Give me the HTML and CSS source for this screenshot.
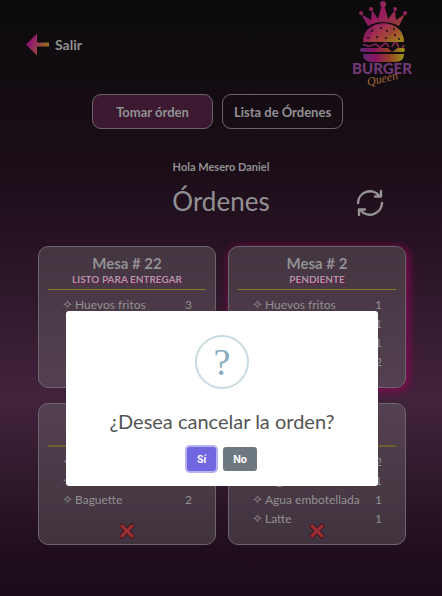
FILE: index.html
```html
<!DOCTYPE html>
<html lang="es">
<head>
<meta charset="utf-8">
<meta name="viewport" content="width=device-width, initial-scale=1">
<title>Órdenes</title>
<link rel="stylesheet" href="styles.css">
</head>
<body>
<header class="top">
  <a class="exit" href="#">
    <svg width="24" height="23" viewBox="0 0 24 23" aria-hidden="true">
      <defs><linearGradient id="arrow" x1="0" y1="0" x2="1" y2=".4"><stop offset=".3" stop-color="#8f1774"/><stop offset="1" stop-color="#9c6c20"/></linearGradient></defs>
      <path fill="url(#arrow)" d="M0 11.500 11 .5V9.500H23V13.500H11V22.500Z"/>
    </svg>
    <span>Salir</span>
  </a>
  <svg class="logo" width="66" height="88" viewBox="0 0 66 88" role="img" aria-label="Burger Queen">
    <defs>
      <linearGradient id="crown" x1="0" y1="0" x2="1" y2=".6"><stop offset="0" stop-color="#6a3078"/><stop offset=".5" stop-color="#94195f"/><stop offset="1" stop-color="#96393f"/></linearGradient>
      <linearGradient id="bun" x1="0" y1="0" x2="1" y2=".6"><stop offset="0" stop-color="#741a6c"/><stop offset=".4" stop-color="#93205a"/><stop offset=".75" stop-color="#9b4a2e"/><stop offset="1" stop-color="#9c801a"/></linearGradient>
      <linearGradient id="base" x1="0" y1="0" x2="1" y2="0"><stop offset="0" stop-color="#5c2c74"/><stop offset=".3" stop-color="#8b1260"/><stop offset=".65" stop-color="#954224"/><stop offset="1" stop-color="#9a9616"/></linearGradient>
    </defs>
    <g fill="url(#crown)">
      <path d="M19 26 12 14 22 20 23 10 29 19 33 4H35L39 19 46 10 47 20 56 14 50 26Q34 18 19 26Z"/>
      <circle cx="34" cy="4" r="3"/><circle cx="22" cy="9" r="2"/><circle cx="46" cy="9" r="2"/><circle cx="12" cy="13" r="2"/><circle cx="56" cy="13" r="2"/>
    </g>
    <path fill="url(#bun)" d="M14 42C14 17 55 17 55 42Z"/>
    <path fill="#b84548" opacity=".35" d="m26 25-5 17h15l7-17ZM43 42l4-14 6 8Z"/>
    <g fill="#170c13"><circle cx="23" cy="31" r="1"/><circle cx="32" cy="28" r="1"/><circle cx="38" cy="31" r="1"/><circle cx="45" cy="29" r="1"/><circle cx="19" cy="38" r="1"/><circle cx="28" cy="37" r="1"/><circle cx="37" cy="38" r="1"/><circle cx="46" cy="35" r="1"/><circle cx="50" cy="39" r="1"/></g>
    <path d="M14 45q3 0 5 1t5-1 5 1 5-1 5 1 5-1 5 1 6-1" fill="none" stroke="url(#crown)" stroke-width="1.500"/>
    <rect x="11" y="48" width="45" height="4" rx="2" fill="url(#base)"/>
    <path d="M38 47h12l-7 5Z" fill="#140c12"/>
    <path fill="url(#base)" d="M14 54H55Q55 62 46 62H23Q14 62 14 54Z"/>
    <text class="logo-name" x="33" y="74" text-anchor="middle">BURGER</text>
    <text class="logo-script" transform="translate(19 86) rotate(-13)">Queen</text>
  </svg>
</header>

<nav class="tabs">
  <button class="tab tab-active" type="button">Tomar órden</button>
  <button class="tab" type="button">Lista de Órdenes</button>
</nav>

<main>
  <p class="greeting">Hola Mesero Daniel</p>
  <div class="heading">
    <h1>Órdenes</h1>
    <button class="refresh" type="button" aria-label="Actualizar">
      <svg width="28" height="28" viewBox="0 0 28 28" fill="none" stroke="#969395" stroke-width="2.400" stroke-linecap="round" stroke-linejoin="round" aria-hidden="true">
        <path d="M2 14A12 12 0 0 1 23.500 7M25 2V7.500H19M26 14A12 12 0 0 1 4.500 21M3 26V20.500H9"/>
      </svg>
    </button>
  </div>

  <section class="orders">
    <article class="card">
      <h2>Mesa # 22</h2>
      <p class="status">LISTO PARA ENTREGAR</p>
      <ul class="items">
        <li><span><i class="star">✧</i>Huevos fritos</span><span>3</span></li>
      </ul>
    </article>
    <article class="card card-pending">
      <h2>Mesa # 2</h2>
      <p class="status">PENDIENTE</p>
      <ul class="items">
        <li><span><i class="star">✧</i>Huevos fritos</span><span>1</span></li>
        <li><span><i class="star">✧</i></span><span>1</span></li>
        <li><span><i class="star">✧</i></span><span>1</span></li>
        <li><span><i class="star">✧</i></span><span>2</span></li>
      </ul>
    </article>
    <article class="card card-done">
      <h2></h2>
      <p class="status"></p>
      <ul class="items">
        <li><span><i class="star">✧</i></span></li>
        <li><span><i class="star">✧</i></span></li>
        <li><span><i class="star">✧</i>Baguette</span><span>2</span></li>
      </ul>
      <button class="cancel" type="button" aria-label="Cancelar orden"><svg width="16" height="16" viewBox="0 0 16 16" aria-hidden="true"><path class="x-edge" d="m3 3 10 10M13 3 3 13"/><path class="x-fill" d="m3 3 10 10M13 3 3 13"/></svg></button>
    </article>
    <article class="card card-done">
      <h2></h2>
      <p class="status"></p>
      <ul class="items">
        <li><span><i class="star">✧</i></span><span>2</span></li>
        <li><span><i class="star">✧</i>Jugo</span><span>1</span></li>
        <li><span><i class="star">✧</i>Agua embotellada</span><span>1</span></li>
        <li><span><i class="star">✧</i>Latte</span><span>1</span></li>
      </ul>
      <button class="cancel" type="button" aria-label="Cancelar orden"><svg width="16" height="16" viewBox="0 0 16 16" aria-hidden="true"><path class="x-edge" d="m3 3 10 10M13 3 3 13"/><path class="x-fill" d="m3 3 10 10M13 3 3 13"/></svg></button>
    </article>
  </section>
</main>

<div class="overlay">
  <div class="dialog" role="dialog" aria-modal="true" aria-labelledby="question">
    <div class="dialog-icon" aria-hidden="true">?</div>
    <h2 id="question">¿Desea cancelar la orden?</h2>
    <div class="actions">
      <button class="confirm" type="button">Sí</button>
      <button class="deny" type="button">No</button>
    </div>
  </div>
</div>
</body>
</html>
```

FILE: styles.css
```css
* { box-sizing: border-box; }

html { min-height: 100%; background: #1c0b1a; }

body {
  margin: 0;
  min-height: 100vh;
  font-family: Lato, "Open Sans", sans-serif;
  color: #929092;
  background: linear-gradient(#0b0b0b 0%, #1b0d18 28%, #281324 42%, #42233c 67%, #321a2d 79%, #1f0d1c 93%, #1c0b1a 100%);
}

h1, h2, p, ul { margin: 0; padding: 0; }
button { font-family: inherit; color: inherit; cursor: pointer; }

.top {
  display: flex;
  justify-content: space-between;
  align-items: center;
  height: 88px;
  padding: 0 27px 0 26px;
}

.exit {
  display: flex;
  align-items: center;
  gap: 5px;
  color: inherit;
  text-decoration: none;
  font-size: 14px;
  font-weight: 700;
}

.logo-name { font: 900 15px Lato, sans-serif; fill: #713974; }
.logo-script { font: italic 12px "Liberation Serif", serif; fill: #a36a35; }

.tabs {
  display: flex;
  justify-content: center;
  gap: 9px;
  padding: 6px 7px 0 0;
}

.tab {
  width: 121px;
  height: 35px;
  padding: 0;
  border: 1px solid #6a646a;
  border-radius: 9px;
  background: transparent;
  font-size: 13px;
  font-weight: 700;
}

.tab-active { background: #3b1931; }

.greeting {
  margin-top: 30px;
  text-align: center;
  font-size: 11px;
  line-height: 16px;
  font-weight: 700;
}

.heading {
  display: grid;
  grid-template-columns: 1fr auto 1fr;
  align-items: center;
  padding: 8px 0 0;
}

.heading h1 { grid-column: 2; font-size: 26px; line-height: 36px; font-weight: 400; }

.refresh {
  justify-self: center;
  display: flex;
  margin-left: 28px;
  padding: 4px 0 0;
  border: 0;
  background: none;
}

.orders {
  display: grid;
  grid-template-columns: 1fr 1fr;
  gap: 15px 12px;
  padding: 27px 36px 24px 38px;
}

.card {
  display: flex;
  flex-direction: column;
  min-height: 142px;
  padding: 7px 9px 5px;
  border: 1px solid #6e646b;
  border-radius: 10px;
  background: rgb(124 124 124 / 34%);
}

.card-pending { box-shadow: 2px 2px 8px 1px #830a50; }

.card h2 { height: 18px; font-size: 15px; line-height: 18px; font-weight: 700; text-align: center; }

.status {
  height: 18px;
  border-bottom: 1px solid #8b7b23;
  font-size: 10px;
  line-height: 14px;
  font-weight: 700;
  text-align: center;
  color: #a59da3;
  text-shadow: 1px 1px 1px #7c1650;
}

.card-done .status { border-bottom: 2px solid #6d5c2d; }

.items {
  padding: 5px 14px 0 14px;
  list-style: none;
  font-size: 12px;
  line-height: 19px;
}

.items li { display: flex; justify-content: space-between; height: 19px; }
.star { display: inline-block; width: 13px; font: 13px "DejaVu Sans", sans-serif; line-height: 12px; }

.card-done { position: relative; }

.cancel {
  position: absolute;
  left: 50%;
  bottom: 5px;
  display: flex;
  padding: 0;
  border: 0;
  background: none;
  transform: translateX(-50%);
}

.cancel path { fill: none; stroke-linecap: round; }
.x-edge { stroke: #4a171f; stroke-width: 5; }
.x-fill { stroke: #9c2e36; stroke-width: 3; }

.overlay {
  position: fixed;
  inset: 0;
  display: flex;
  align-items: center;
  justify-content: center;
  padding: 201px 64px 0 66px;
}

.dialog {
  display: flex;
  flex-direction: column;
  align-items: center;
  width: 100%;
  max-width: 512px;
  padding: 24px 12px 15px;
  border-radius: 3px;
  background: #fff;
}

.dialog-icon {
  width: 54px;
  height: 54px;
  border: 2px solid #c9dae1;
  border-radius: 50%;
  color: #87adbd;
  font: 38px/50px "Liberation Serif", serif;
  text-align: center;
}

.dialog h2 {
  margin-top: 19px;
  font-size: 20px;
  line-height: 26px;
  font-weight: 400;
  color: #545454;
}

.actions { display: flex; gap: 7px; margin-top: 13px; }

.actions button {
  height: 24px;
  padding: 0 10px;
  border: 0;
  border-radius: 3px;
  color: #fff;
  font: 700 10px Inter, sans-serif;
}

.confirm { background: #7066e0; box-shadow: 0 0 0 2px #b7b2ef; }
.deny { background: #6e7881; }
```
